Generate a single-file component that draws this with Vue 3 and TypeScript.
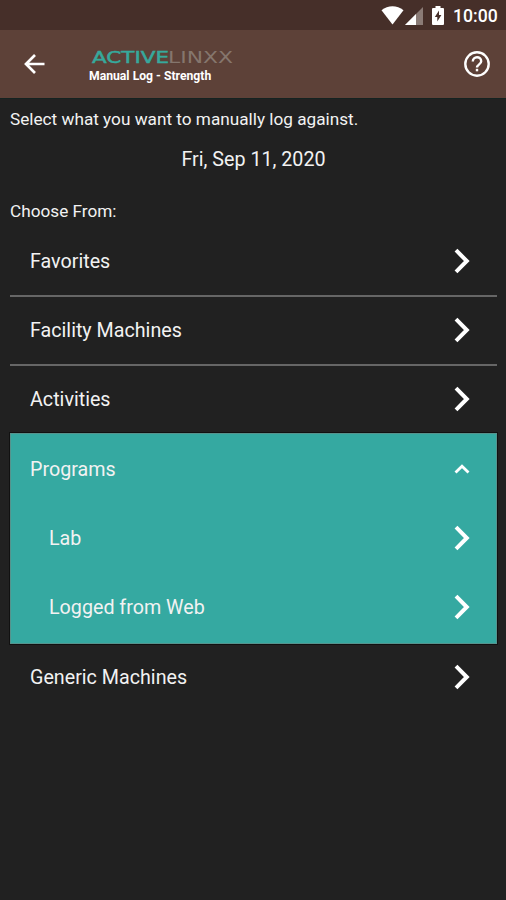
<script setup lang="ts">
import { ref } from 'vue'

interface Entry {
  label: string
  children?: string[]
}

const entries: Entry[] = [
  { label: 'Favorites' },
  { label: 'Facility Machines' },
  { label: 'Activities' },
  { label: 'Programs', children: ['Lab', 'Logged from Web'] },
  { label: 'Generic Machines' },
]

const expanded = ref('Programs')

function toggle(entry: Entry) {
  if (entry.children) {
    expanded.value = expanded.value === entry.label ? '' : entry.label
  }
}
</script>

<template>
  <div class="screen">
    <div class="status">
      <svg class="wifi" width="23" height="19" viewBox="0 0 23 19">
        <path d="M0.5 4.2C7-1.2 16-1.2 22.5 4.2L11.5 18.6Z" fill="#fff" />
      </svg>
      <svg class="signal" width="18" height="18" viewBox="0 0 18 18">
        <path d="M18 0V18H0Z" fill="#8a7b76" />
        <path d="M11 7V18H0Z" fill="#fff" />
      </svg>
      <svg class="battery" width="12" height="19" viewBox="0 0 12 19">
        <path d="M3.5 0H8.5V2H11Q12 2 12 3V18Q12 19 11 19H1Q0 19 0 18V3Q0 2 1 2H3.5Z" fill="#fff" />
        <path d="M7 4.5L2.8 11H5.3V15.5L9.4 9H7Z" fill="#462f29" />
      </svg>
      <span class="clock">10:00</span>
    </div>

    <header class="bar">
      <svg class="back" width="22" height="22" viewBox="0 0 22 22">
        <path d="M20.5 11H2.5M11 2L2 11L11 20" fill="none" stroke="#fff" stroke-width="2.7" />
      </svg>
      <div class="titles">
        <svg class="logo" width="148" height="26" viewBox="0 0 148 26">
          <text class="active" x="3" y="19" textLength="77" lengthAdjust="spacingAndGlyphs">ACTIVE</text>
          <text class="linxx" x="79" y="19" textLength="65" lengthAdjust="spacingAndGlyphs">LINXX</text>
        </svg>
        <div class="subtitle">Manual Log - Strength</div>
      </div>
      <svg class="help" width="28" height="28" viewBox="0 0 28 28">
        <circle cx="14" cy="14" r="11.7" fill="none" stroke="#fff" stroke-width="2.4" />
        <path d="M9.8 11.6C9.8 5.8 18.2 5.8 18.2 11.3C18.2 14.3 14 14.4 14 17.6" fill="none" stroke="#fff" stroke-width="2.4" />
        <rect x="12.8" y="18.8" width="2.4" height="2.5" fill="#fff" />
      </svg>
    </header>

    <main class="content">
      <p class="prompt">Select what you want to manually log against.</p>
      <p class="date">Fri, Sep 11, 2020</p>
      <p class="choose">Choose From:</p>
      <div class="list">
        <section
          v-for="entry in entries"
          :key="entry.label"
          class="entry"
          :class="{ open: entry.label === expanded }"
        >
          <div class="row" @click="toggle(entry)">
            <span>{{ entry.label }}</span>
            <svg v-if="entry.label === expanded" class="chevron" width="16" height="26" viewBox="0 0 16 26">
              <path d="M1.5 16.6L8 10.2L14.5 16.6" fill="none" stroke="#fff" stroke-width="2.8" />
            </svg>
            <svg v-else class="chevron" width="16" height="26" viewBox="0 0 16 26">
              <path d="M2 2.2L12.8 13L2 23.8" fill="none" stroke="#fff" stroke-width="4" />
            </svg>
          </div>
          <template v-if="entry.label === expanded">
            <div v-for="child in entry.children" :key="child" class="row child">
              <span>{{ child }}</span>
              <svg class="chevron" width="16" height="26" viewBox="0 0 16 26">
                <path d="M2 2.2L12.8 13L2 23.8" fill="none" stroke="#fff" stroke-width="4" />
              </svg>
            </div>
          </template>
        </section>
      </div>
    </main>
  </div>
</template>

<style>
body {
  margin: 0;
  background: #212121;
}
</style>

<style scoped>
.screen {
  width: 506px;
  height: 900px;
  box-sizing: border-box;
  overflow: hidden;
  background: #212121;
  color: #f2f2f2;
  font-family: Roboto, "Liberation Sans", sans-serif;
}
.status {
  height: 30px;
  box-sizing: border-box;
  padding: 6px 9px 0 0;
  display: flex;
  justify-content: flex-end;
  align-items: flex-start;
  background: #462f29;
}
.signal {
  margin: 1px 9px 0 1px;
}
.battery {
  margin-right: 9px;
}
.clock {
  width: 44px;
  font-size: 17.6px;
  line-height: 20px;
  font-weight: 500;
  color: #fff;
  white-space: nowrap;
}
.bar {
  height: 68px;
  display: flex;
  align-items: center;
  padding: 0 15px 0 24px;
  background: #5d4138;
  border-bottom: 1px solid #142321;
}
.titles {
  flex: 1;
  align-self: flex-start;
  margin-left: 43px;
  padding-top: 14px;
}
.logo {
  display: block;
}
.logo text {
  font-family: "DejaVu Sans", Roboto, sans-serif;
  font-size: 16.5px;
}
.active {
  fill: #36a99c;
  stroke: #36a99c;
  stroke-width: 0.5px;
}
.linxx {
  fill: #85766d;
}
.subtitle {
  margin-top: -2px;
  font-size: 12.2px;
  line-height: 16px;
  font-weight: 700;
  color: #fff;
}
.content {
  padding: 0 9px 0 10px;
}
p {
  margin: 0;
}
.prompt,
.choose {
  font-size: 17.2px;
  line-height: 20px;
}
.prompt {
  padding-top: 10px;
}
.date {
  margin-top: 19px;
  font-size: 19.7px;
  line-height: 24px;
  text-align: center;
}
.choose {
  margin-top: 29px;
}
.list {
  margin-top: 7px;
}
.entry {
  height: 69px;
  box-sizing: border-box;
  border-bottom: 2px solid #666;
}
.row {
  height: 69px;
  box-sizing: border-box;
  padding: 0 27px 2px 20px;
  display: flex;
  align-items: center;
  justify-content: space-between;
  font-size: 19.7px;
}
.chevron {
  margin-bottom: 2px;
}
.entry:nth-child(3),
.entry:last-child {
  border-bottom: 0;
}
.entry:nth-child(3) {
  height: 67px;
}
.entry.open {
  height: 211px;
  padding-top: 2px;
  border: 1px solid #56938d;
  background: #35a9a1;
  box-shadow: 0 0 0 1px #111;
}
.open .row {
  padding: 0 26px 2px 19px;
}
.open .row.child {
  padding-left: 38px;
}
</style>
